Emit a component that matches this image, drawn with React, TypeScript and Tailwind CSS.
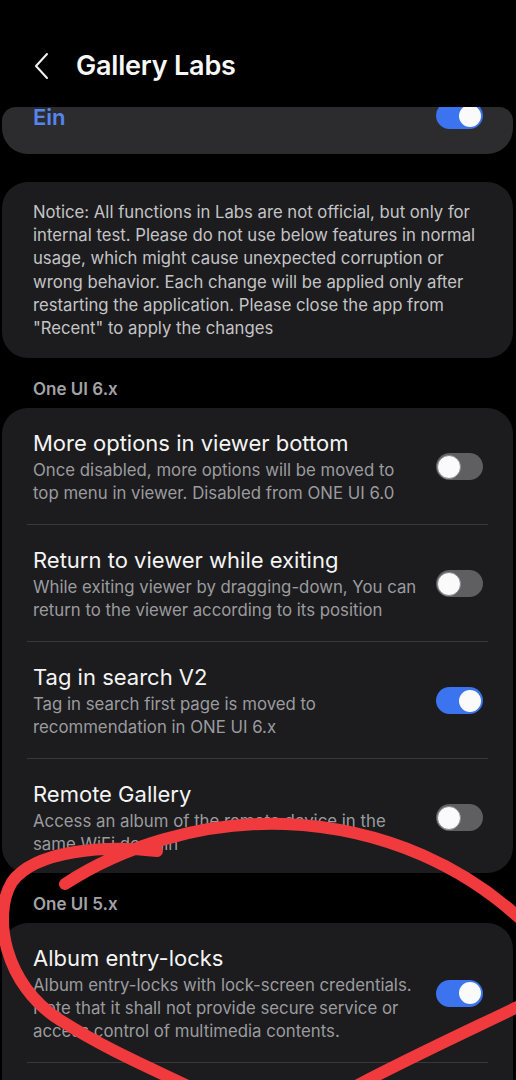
import React from 'react';

type Item = {
  title: string;
  desc: string;
  on: boolean;
};

const ui6: Item[] = [
  {
    title: 'More options in viewer bottom',
    desc: 'Once disabled, more options will be moved to top menu in viewer. Disabled from ONE UI 6.0',
    on: false,
  },
  {
    title: 'Return to viewer while exiting',
    desc: 'While exiting viewer by dragging-down, You can return to the viewer according to its position',
    on: false,
  },
  {
    title: 'Tag in search V2',
    desc: 'Tag in search first page is moved to recommendation in ONE UI 6.x',
    on: true,
  },
  {
    title: 'Remote Gallery',
    desc: 'Access an album of the remote device in the same WiFi domain',
    on: false,
  },
];

const ui5: Item[] = [
  {
    title: 'Album entry-locks',
    desc: 'Album entry-locks with lock-screen credentials. Note that it shall not provide secure service or access control of multimedia contents.',
    on: true,
  },
];

const Toggle: React.FC<{ on: boolean }> = ({ on }) => (
  <div
    className={
      on
        ? 'flex h-[27px] w-[47px] shrink-0 items-center justify-end rounded-full bg-[#3b74ee] pr-[2px]'
        : 'flex h-[27px] w-[47px] shrink-0 items-center justify-start rounded-full bg-[#5f5f62] pl-[1px]'
    }
  >
    <div
      className={
        on
          ? 'h-[22px] w-[22px] rounded-full bg-[#fafafa]'
          : 'h-[24px] w-[24px] rounded-full border border-[#8a8a8d] bg-[#fafafa]'
      }
    />
  </div>
);

const Row: React.FC<{ item: Item; last?: boolean }> = ({ item, last }) => (
  <div>
    <div
      className={
        last
          ? 'flex items-center pl-[31px] pr-[30px] pt-[20px] pb-[17px]'
          : 'flex items-center pl-[31px] pr-[30px] pt-[20px] pb-[19px]'
      }
    >
      <div className="w-[388px]">
        <div className="text-[22px] leading-[31px] text-[#f4f4f4]">{item.title}</div>
        <div className="text-[16.8px] leading-[23px] text-[#9b9b9e]">{item.desc}</div>
      </div>
      <div className="ml-auto">
        <Toggle on={item.on} />
      </div>
    </div>
    {!last && <div className="mx-[25px] h-px bg-[#38383b]" />}
  </div>
);

const Section: React.FC<{ label: string }> = ({ label }) => (
  <div className="pl-[31px] pt-[21px] pb-[9px] text-[17px] font-semibold leading-[20px] text-[#a3a3a6]">
    {label}
  </div>
);

export default function App() {
  return (
    <div className="relative h-[1080px] w-[516px] overflow-hidden bg-black font-['Inter',sans-serif]">
      {/* header */}
      <div className="mt-[44px] flex h-[44px] items-center">
        <svg className="ml-[33px]" width="16" height="28" viewBox="0 0 16 28" fill="none">
          <polyline points="14,2 3,14 14,26" stroke="#f2f2f2" strokeWidth="2" strokeLinecap="round" strokeLinejoin="round" />
        </svg>
        <h1 className="ml-[27px] text-[27px] font-semibold tracking-[-0.2px] text-[#f7f7f7]">Gallery Labs</h1>
      </div>

      <div className="mt-[19px] ml-[2px] mr-[3px]">
        {/* master switch, scrolled under the header */}
        <div className="flex h-[47px] items-start rounded-t-[14px] rounded-b-[26px] bg-[#2c2c2e] pl-[31px] pr-[30px]">
          <span className="text-[22px] font-semibold leading-[20px] text-[#5585ee]">Ein</span>
          <div className="ml-auto h-[22px] overflow-hidden">
            <div className="-mt-[5px]">
              <Toggle on />
            </div>
          </div>
        </div>

        {/* notice */}
        <div className="mt-[28px] rounded-[26px] bg-[#1c1c1e] pl-[31px] pr-[26px] pt-[19px] pb-[18px] text-[16.7px] leading-[23.2px] text-[#c4c4c6]">
          Notice: All functions in Labs are not official, but only for internal test. Please do not use below
          features in normal usage, which might cause unexpected corruption or wrong behavior. Each change will be
          applied only after restarting the application. Please close the app from "Recent" to apply the changes
        </div>

        <Section label="One UI 6.x" />
        <div className="rounded-[26px] bg-[#1c1c1e]">
          {ui6.map((it, i) => (
            <Row key={it.title} item={it} last={i === ui6.length - 1} />
          ))}
        </div>

        <Section label="One UI 5.x" />
        <div className="rounded-t-[26px] bg-[#1c1c1e]">
          {ui5.map((it) => (
            <Row key={it.title} item={it} />
          ))}
          <div className="h-[60px]" />
        </div>
      </div>

      {/* hand-drawn red circle over the screenshot */}
      <svg className="pointer-events-none absolute left-0 top-0" width="516" height="1080" viewBox="0 0 516 1080" fill="none">
        <path
          d="M157 851 C105 845 35 850 12 882 C-8 915 4 985 60 1020 C110 1052 160 1072 200 1092 L345 1092 C400 1062 470 1030 532 1000 L532 930 C470 868 385 828 285 824 C200 821 120 848 65 884"
          stroke="#f03a3e"
          strokeWidth="12"
          strokeLinecap="round"
          strokeLinejoin="round"
        />
      </svg>
    </div>
  );
}
